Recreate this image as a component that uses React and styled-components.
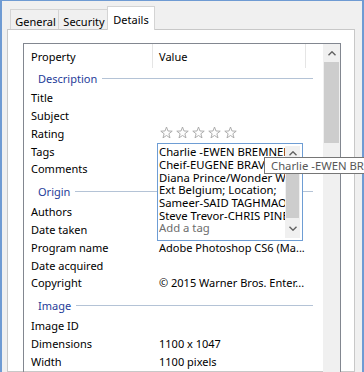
import React from "react";
import styled, { createGlobalStyle } from "styled-components";

const Global = createGlobalStyle`
  html, body { margin: 0; padding: 0; overflow: hidden; background: #f0f0f0; }
  body { font-family: "Noto Sans", "Open Sans", sans-serif; font-size: 11px; color: #000; }
  * { box-sizing: border-box; }
`;

const Stage = styled.div`
  position: relative;
  width: 364px;
  height: 372px;
  overflow: hidden;
`;

const Window = styled.div`
  width: 364px;
  height: 372px;
  background: #f0f0f0;
  border-top: 1px solid #6f9bd3;
  border-left: 2px solid #6f9bd3;
  border-right: 2px solid #6f9bd3;
  overflow: hidden;
  display: flex;
  flex-direction: column;
`;

const TabStrip = styled.div`
  display: flex;
  align-items: flex-end;
  height: 28px;
  padding-left: 8px;
  flex: none;
`;

const Tab = styled.div`
  position: relative;
  z-index: ${(p) => (p.$active ? 2 : 1)};
  width: ${(p) => p.$w}px;
  height: ${(p) => (p.$active ? 24 : 20)}px;
  margin-left: ${(p) => (p.$first ? 0 : -1)}px;
  margin-bottom: ${(p) => (p.$active ? -1 : 0)}px;
  background: ${(p) => (p.$active ? "#fff" : "#f0f0f0")};
  border: 1px solid #d4d4d4;
  border-bottom: none;
  display: flex;
  justify-content: center;
  align-items: center;
  padding-top: ${(p) => (p.$active ? 1 : 3)}px;
  padding-left: ${(p) => (p.$active ? 0 : 2)}px;
  white-space: nowrap;
`;

const Page = styled.div`
  margin-left: 5px;
  width: 348px;
  flex: 1;
  min-height: 0;
  background: #fff;
  border: 1px solid #c8c8c8;
  padding: 13px 0 0 15px;
`;

const ListView = styled.div`
  width: 318px;
  height: 400px;
  border: 1px solid #828790;
  display: flex;
`;

const ListBody = styled.div`
  flex: 1;
  display: flex;
  flex-direction: column;
`;

const HeaderRow = styled.div`
  display: flex;
  height: 24px;
  flex: none;
`;

const HeaderCell = styled.div`
  width: ${(p) => p.$w}px;
  padding-left: ${(p) => p.$pl}px;
  border-right: 1px solid #e5e5e5;
  display: flex;
  align-items: center;
`;

const GroupRow = styled.div`
  height: ${(p) => p.$h}px;
  display: flex;
  align-items: center;
  padding: ${(p) => p.$pt}px 10px 0 14px;
  flex: none;
`;

const GroupLabel = styled.span`
  color: #1e3c99;
  font-size: 11px;
`;

const GroupLine = styled.div`
  flex: 1;
  height: 1px;
  background: #b4c3d6;
  margin-left: 5px;
`;

const Row = styled.div`
  position: relative;
  height: 17.75px;
  display: flex;
  align-items: center;
  flex: none;
`;

const PropCell = styled.div`
  width: 129px;
  padding-left: 7px;
  white-space: nowrap;
`;

const ValueCell = styled.div`
  flex: 1;
  padding-left: 6px;
  white-space: nowrap;
  display: flex;
  align-items: center;
`;

const Stars = styled.div`
  display: flex;
  gap: 3px;
  margin-left: 1px;
  margin-top: -2px;
`;

const ScrollBar = styled.div`
  width: 17px;
  background: #f0f0f0;
  display: flex;
  flex-direction: column;
  flex: none;
`;

const ScrollButton = styled.div`
  height: ${(p) => p.$h}px;
  display: flex;
  align-items: center;
  justify-content: center;
  flex: none;
`;

const Thumb = styled.div`
  height: ${(p) => p.$h}px;
  margin: 0 1px;
  background: #cdcdcd;
  flex: none;
`;

const TagEditor = styled.div`
  position: absolute;
  left: 133px;
  top: 1px;
  width: 146px;
  height: 98px;
  background: #fff;
  border: 1px solid #6e9dd4;
  display: flex;
  padding: 2px 2px 2px 0;
  z-index: 3;
`;

const TagList = styled.div`
  flex: 1;
  overflow: hidden;
  padding-left: 1px;
  display: flex;
  flex-direction: column;
`;

const TagLine = styled.div`
  height: 12.7px;
  line-height: 12.7px;
  font-size: 11.3px;
  white-space: nowrap;
  overflow: hidden;
  color: ${(p) => (p.$muted ? "#6d6d6d" : "#000")};
`;

const MiniScroll = styled.div`
  width: 15px;
  background: #f0f0f0;
  display: flex;
  flex-direction: column;
`;

const Spacer = styled.div`
  height: ${(p) => p.$h}px;
  flex: none;
`;

const Tooltip = styled.div`
  position: absolute;
  left: 264px;
  top: 157px;
  height: 17px;
  width: 160px;
  background: #fff;
  border: 1px solid #767676;
  color: #575757;
  font-size: 11.3px;
  padding-left: 6px;
  display: flex;
  align-items: center;
  white-space: nowrap;
  z-index: 10;
`;

const Chevron = ({ down, color = "#606060" }) => (
  <svg width="8" height="5" viewBox="0 0 8 5">
    <polyline
      points={down ? "0.5,0.8 4,4.2 7.5,0.8" : "0.5,4.2 4,0.8 7.5,4.2"}
      fill="none"
      stroke={color}
      strokeWidth="1.4"
    />
  </svg>
);

const Star = () => (
  <svg width="13" height="13" viewBox="0 0 13 13">
    <polygon
      points="6.5,1 7.97,4.98 12.21,5.15 8.88,7.77 10.03,11.85 6.5,9.5 2.97,11.85 4.12,7.77 0.79,5.15 5.03,4.98"
      fill="#fdfdfd"
      stroke="#a6a6a6"
      strokeWidth="0.9"
      strokeLinejoin="round"
    />
  </svg>
);

const tags = [
  "Charlie -EWEN BREMNER",
  "Cheif-EUGENE BRAVO",
  "Diana Prince/Wonder Woman",
  "Ext Belgium; Location;",
  "Sameer-SAID TAGHMAOUI",
  "Steve Trevor-CHRIS PINE",
];

const sections = [
  {
    title: "Description",
    h: 21,
    pt: 0,
    rows: [
      ["Title"],
      ["Subject"],
      ["Rating", "stars"],
      ["Tags", "tags"],
      ["Comments"],
    ],
  },
  {
    title: "Origin",
    h: 25.25,
    pt: 2,
    rows: [
      ["Authors"],
      ["Date taken"],
      ["Program name", "Adobe Photoshop CS6 (Ma..."],
      ["Date acquired"],
      ["Copyright", "© 2015 Warner Bros. Enter..."],
    ],
  },
  {
    title: "Image",
    h: 25.25,
    pt: 2,
    rows: [
      ["Image ID"],
      ["Dimensions", "1100 x 1047"],
      ["Width", "1100 pixels"],
      ["Height", "1047 pixels"],
    ],
  },
];

function renderValue(v) {
  if (v === "stars") {
    return (
      <Stars>
        {[0, 1, 2, 3, 4].map((i) => (
          <Star key={i} />
        ))}
      </Stars>
    );
  }
  if (v === "tags") return null;
  return v || "";
}

export default function App() {
  return (
    <Stage>
      <Global />
      <Window>
        <TabStrip>
          <Tab $first $w={49}>General</Tab>
          <Tab $w={50}>Security</Tab>
          <Tab $active $w={48}>Details</Tab>
        </TabStrip>
        <Page>
          <ListView>
            <ListBody>
              <HeaderRow>
                <HeaderCell $w={129} $pl={7}>Property</HeaderCell>
                <HeaderCell $w={153} $pl={6}>Value</HeaderCell>
              </HeaderRow>
              {sections.map((s) => (
                <React.Fragment key={s.title}>
                  <GroupRow $h={s.h} $pt={s.pt}>
                    <GroupLabel>{s.title}</GroupLabel>
                    <GroupLine />
                  </GroupRow>
                  {s.rows.map(([label, value]) => (
                    <Row key={label}>
                      <PropCell>{label}</PropCell>
                      <ValueCell>{renderValue(value)}</ValueCell>
                      {value === "tags" && (
                        <TagEditor>
                          <TagList>
                            {tags.map((t) => (
                              <TagLine key={t}>{t}</TagLine>
                            ))}
                            <TagLine $muted>Add a tag</TagLine>
                          </TagList>
                          <MiniScroll>
                            <ScrollButton $h={14}>
                              <Chevron />
                            </ScrollButton>
                            <Thumb $h={58} />
                            <Spacer $h={2} />
                            <ScrollButton $h={16}>
                              <Chevron down />
                            </ScrollButton>
                          </MiniScroll>
                        </TagEditor>
                      )}
                    </Row>
                  ))}
                </React.Fragment>
              ))}
            </ListBody>
            <ScrollBar>
              <ScrollButton $h={18}>
                <Chevron />
              </ScrollButton>
              <Thumb $h={81} />
            </ScrollBar>
          </ListView>
        </Page>
      </Window>
      <Tooltip>Charlie -EWEN BREMNER</Tooltip>
    </Stage>
  );
}
